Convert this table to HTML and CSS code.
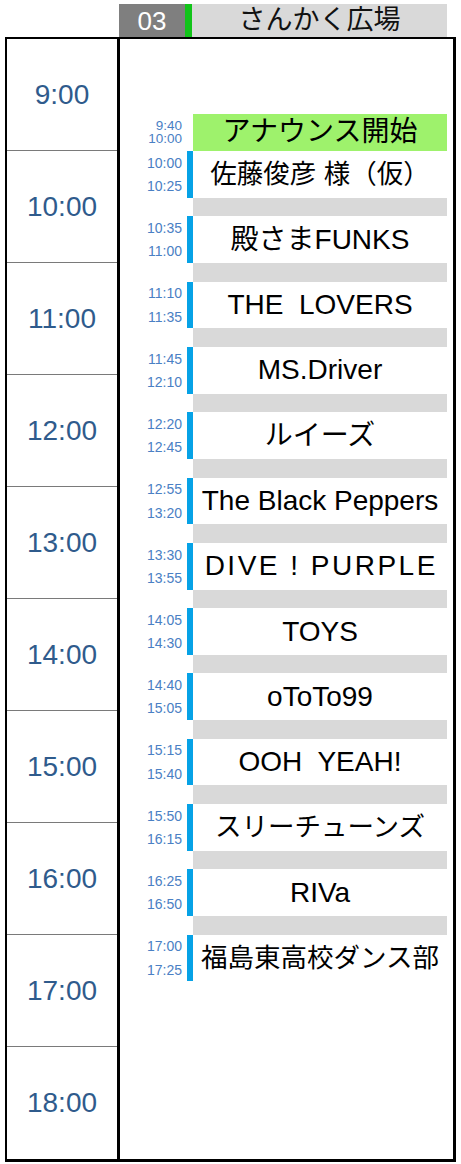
FILE: index.html
```html
<!DOCTYPE html>
<html lang="ja">
<head>
<meta charset="utf-8">
<title>さんかく広場 タイムテーブル</title>
<link rel="stylesheet" href="styles.css">
</head>
<body>
<div class="header">
  <div class="num">03</div>
  <div class="stripe"></div>
  <div class="venue">さんかく広場</div>
</div>
<div class="board">
  <div class="hours">
    <div class="hour">9:00</div>
    <div class="hour">10:00</div>
    <div class="hour">11:00</div>
    <div class="hour">12:00</div>
    <div class="hour">13:00</div>
    <div class="hour">14:00</div>
    <div class="hour">15:00</div>
    <div class="hour">16:00</div>
    <div class="hour">17:00</div>
    <div class="hour">18:00</div>
  </div>
  <div class="stage">
    <div class="lead"></div>
    <div class="slot announce">
      <div class="times tight"><span>9:40</span><span>10:00</span></div>
      <div class="nobar"></div>
      <div class="name green">アナウンス開始</div>
    </div>
    <div class="slot act">
      <div class="times"><span>10:00</span><span>10:25</span></div>
      <div class="bar"></div>
      <div class="name sm">佐藤俊彦 様（仮）</div>
    </div>
    <div class="gap"></div>
    <div class="slot act">
      <div class="times"><span>10:35</span><span>11:00</span></div>
      <div class="bar"></div>
      <div class="name">殿さまFUNKS</div>
    </div>
    <div class="gap"></div>
    <div class="slot act">
      <div class="times"><span>11:10</span><span>11:35</span></div>
      <div class="bar"></div>
      <div class="name pre">THE  LOVERS</div>
    </div>
    <div class="gap"></div>
    <div class="slot act">
      <div class="times"><span>11:45</span><span>12:10</span></div>
      <div class="bar"></div>
      <div class="name">MS.Driver</div>
    </div>
    <div class="gap"></div>
    <div class="slot act">
      <div class="times"><span>12:20</span><span>12:45</span></div>
      <div class="bar"></div>
      <div class="name">ルイーズ</div>
    </div>
    <div class="gap"></div>
    <div class="slot act">
      <div class="times"><span>12:55</span><span>13:20</span></div>
      <div class="bar"></div>
      <div class="name">The Black Peppers</div>
    </div>
    <div class="gap"></div>
    <div class="slot act">
      <div class="times"><span>13:30</span><span>13:55</span></div>
      <div class="bar"></div>
      <div class="name pre wide">DIVE ! PURPLE</div>
    </div>
    <div class="gap"></div>
    <div class="slot act">
      <div class="times"><span>14:05</span><span>14:30</span></div>
      <div class="bar"></div>
      <div class="name">TOYS</div>
    </div>
    <div class="gap"></div>
    <div class="slot act">
      <div class="times"><span>14:40</span><span>15:05</span></div>
      <div class="bar"></div>
      <div class="name">oToTo99</div>
    </div>
    <div class="gap"></div>
    <div class="slot act">
      <div class="times"><span>15:15</span><span>15:40</span></div>
      <div class="bar"></div>
      <div class="name pre">OOH  YEAH!</div>
    </div>
    <div class="gap"></div>
    <div class="slot act">
      <div class="times"><span>15:50</span><span>16:15</span></div>
      <div class="bar"></div>
      <div class="name sm">スリーチューンズ</div>
    </div>
    <div class="gap"></div>
    <div class="slot act">
      <div class="times"><span>16:25</span><span>16:50</span></div>
      <div class="bar"></div>
      <div class="name">RIVa</div>
    </div>
    <div class="gap"></div>
    <div class="slot act">
      <div class="times"><span>17:00</span><span>17:25</span></div>
      <div class="bar"></div>
      <div class="name sm">福島東高校ダンス部</div>
    </div>
  </div>
</div>
</body>
</html>
```

FILE: styles.css
```css
* {
  box-sizing: border-box;
}

html, body {
  margin: 0;
  padding: 0;
  background: #ffffff;
}

body {
  font-family: "Liberation Sans", "Noto Sans CJK JP", sans-serif;
  color: #000000;
}

.header {
  display: flex;
  margin: 4px 0 0 119px;
  height: 33px;
}

.num {
  width: 66px;
  background: #7f7f7f;
  color: #ffffff;
  font-size: 26px;
  display: flex;
  align-items: center;
  justify-content: center;
  line-height: 1;
}

.stripe {
  width: 7px;
  background: #12c41a;
}

.venue {
  width: 255px;
  background: #d9d9d9;
  font-size: 27px;
  display: flex;
  align-items: center;
  justify-content: center;
  line-height: 1;
  color: #111111;
}

.board {
  margin-left: 5px;
  width: 451px;
  border-style: solid;
  border-color: #000000;
  border-width: 2px 3px 3px 2px;
  display: grid;
  grid-template-columns: 113px 333px;
}

.hours {
  border-right: 3px solid #000000;
  display: flex;
  flex-direction: column;
}

.hour {
  height: 112px;
  border-bottom: 1px solid #7a7a7a;
  display: flex;
  align-items: center;
  justify-content: center;
  font-size: 28px;
  color: #2f5b8c;
  line-height: 1;
}

.hour:last-child {
  border-bottom: none;
}

.stage {
  display: flex;
  flex-direction: column;
}

.lead {
  height: 74.667px;
}

.slot {
  display: grid;
  grid-template-columns: 67px 6px 254px;
}

.announce {
  height: 37.333px;
}

.act {
  height: 46.667px;
}

.gap {
  height: 18.667px;
  margin-left: 73px;
  width: 254px;
  background: #d9d9d9;
}

.times {
  display: flex;
  flex-direction: column;
  align-items: flex-end;
  padding-right: 5px;
  font-size: 14px;
  color: #4a80c4;
}

.times span {
  flex: 1;
  display: flex;
  align-items: center;
  line-height: 1;
}

.times.tight {
  justify-content: center;
}

.times.tight span {
  flex: none;
  height: 13px;
  line-height: 13px;
  font-size: 13.5px;
}

.bar {
  background: #06a2e6;
}

.nobar {
  background: transparent;
}

.name {
  display: flex;
  align-items: center;
  justify-content: center;
  font-size: 28px;
  line-height: 1;
  white-space: nowrap;
  background: #ffffff;
}

.name.green {
  background: #9ef26c;
}

.name.sm {
  font-size: 26.5px;
}

.name.pre {
  white-space: pre;
}

.name.wide {
  letter-spacing: 2.5px;
  padding-left: 2.5px;
}
```
